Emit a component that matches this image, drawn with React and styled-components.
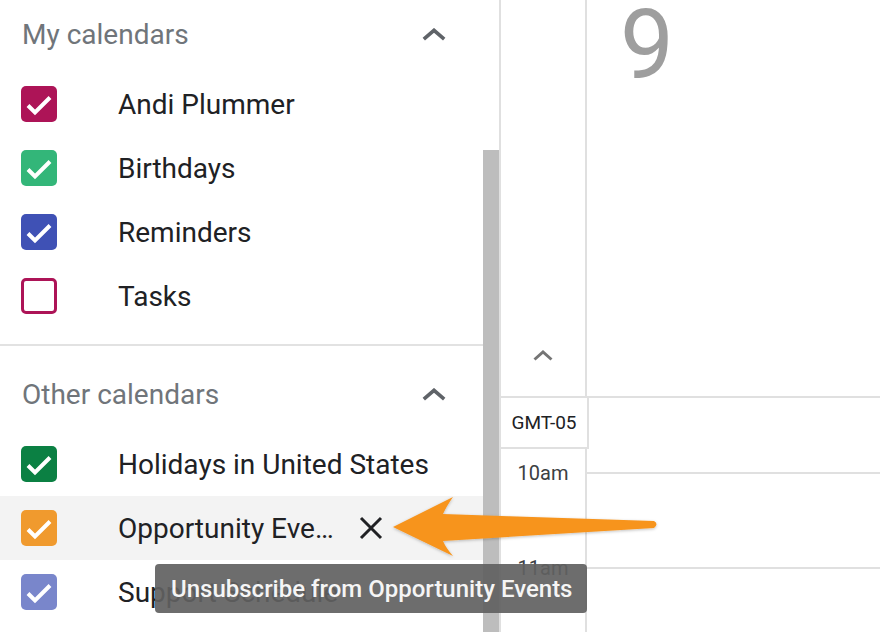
import React from "react";
import styled, { createGlobalStyle } from "styled-components";

const Global = createGlobalStyle`
  html, body { margin: 0; padding: 0; background: #fff; }
  body { font-family: Roboto, "Noto Sans", Arial, sans-serif; overflow: hidden; }
  * { box-sizing: border-box; }
`;

const Page = styled.div`
  position: relative;
  width: 880px;
  height: 632px;
  display: flex;
  overflow: hidden;
  background: #fff;
`;

const Sidebar = styled.div`
  display: flex;
  width: 499px;
  height: 100%;
  flex: none;
`;

const SideContent = styled.div`
  width: 483px;
  display: flex;
  flex-direction: column;
`;

const ScrollTrack = styled.div`
  width: 16px;
  display: flex;
  flex-direction: column;
  padding-top: 150px;
`;

const ScrollThumb = styled.div`
  flex: 1;
  background: #bdbdbd;
`;

const SectionHeader = styled.div`
  height: 68px;
  flex: none;
  margin-top: ${(p) => p.$top || 0}px;
  display: flex;
  align-items: center;
  justify-content: space-between;
  padding: 0 37px 0 22px;
  font-size: 28px;
  color: #70757a;
`;

const List = styled.div`
  margin-top: 4px;
  display: flex;
  flex-direction: column;
  flex: none;
`;

const Row = styled.div`
  height: 64px;
  display: flex;
  align-items: center;
  padding-left: 21px;
  background: ${(p) => (p.$hover ? "#f3f3f3" : "transparent")};
`;

const Box = styled.div`
  width: 36px;
  height: 36px;
  flex: none;
  border-radius: 5px;
  background: ${(p) => (p.$checked ? p.$color : "#fff")};
  border: ${(p) => (p.$checked ? "none" : `3px solid ${p.$color}`)};
  display: flex;
  align-items: center;
  justify-content: center;
`;

const Label = styled.span`
  margin-left: 61px;
  font-size: 28px;
  color: #202124;
  white-space: nowrap;
  overflow: hidden;
  text-overflow: ellipsis;
  max-width: ${(p) => (p.$max ? `${p.$max}px` : "none")};
`;

const CloseBtn = styled.span`
  margin-left: 25px;
  width: 24px;
  height: 24px;
  display: flex;
  align-items: center;
  justify-content: center;
`;

const Divider = styled.div`
  height: 2px;
  flex: none;
  background: #e2e2e2;
  margin-top: 16px;
`;

const Main = styled.div`
  flex: 1;
  display: flex;
  flex-direction: column;
  border-left: 2px solid #e0e0e0;
  overflow: hidden;
`;

const HeadRow = styled.div`
  height: 398px;
  flex: none;
  display: flex;
  border-bottom: 2px solid #e0e0e0;
`;

const Gutter = styled.div`
  width: 86px;
  flex: none;
  display: flex;
  flex-direction: column;
  align-items: center;
  justify-content: flex-end;
  padding-bottom: 35px;
  border-right: 2px solid #e0e0e0;
`;

const DayHead = styled.div`
  flex: 1;
  padding-left: 33px;
  font-size: 96px;
  line-height: 90px;
  color: #9e9e9e;
`;

const BodyRow = styled.div`
  flex: 1;
  min-height: 0;
  display: flex;
`;

const TimeCol = styled.div`
  width: 86px;
  flex: none;
  display: flex;
  flex-direction: column;
`;

const ZoneBox = styled.div`
  height: 51px;
  width: 88px;
  flex: none;
  border-right: 2px solid #e0e0e0;
  border-bottom: 2px solid #e0e0e0;
  display: flex;
  align-items: center;
  justify-content: center;
  font-size: 19px;
  color: #202124;
`;

const HourLabels = styled.div`
  flex: 1;
  width: 86px;
  border-right: 2px solid #e0e0e0;
  padding-top: 14px;
  display: flex;
  flex-direction: column;
  align-items: center;
`;

const HourLabel = styled.div`
  height: 95px;
  flex: none;
  font-size: 20px;
  line-height: 20px;
  color: #3c4043;
`;

const DayCol = styled.div`
  flex: 1;
  padding-top: 74px;
  display: flex;
  flex-direction: column;
`;

const HourSlot = styled.div`
  height: 95px;
  flex: none;
  border-top: 2px solid #e0e0e0;
`;

const Tooltip = styled.div`
  position: absolute;
  left: 155px;
  top: 564px;
  width: 432px;
  height: 49px;
  border-radius: 4px;
  background: rgba(97, 97, 97, 0.92);
  color: #f5f5f5;
  font-size: 24px;
  font-weight: 500;
  display: flex;
  align-items: center;
  padding-left: 16px;
  white-space: nowrap;
`;

const ArrowSvg = styled.svg`
  position: absolute;
  left: 380px;
  top: 490px;
  overflow: visible;
`;

const Chevron = ({ w = 24, h = 13, color = "#5f6368", sw = 3.6 }) => (
  <svg width={w} height={h} viewBox={`0 0 ${w} ${h}`}>
    <polyline
      points={`${sw / 2},${h - sw / 2} ${w / 2},${sw / 2 + 0.5} ${w - sw / 2},${h - sw / 2}`}
      fill="none"
      stroke={color}
      strokeWidth={sw}
      strokeLinejoin="miter"
    />
  </svg>
);

const Check = () => (
  <svg width="36" height="36" viewBox="0 0 36 36">
    <polyline points="7,19.5 14,26.5 29,11.5" fill="none" stroke="#fff" strokeWidth="4" />
  </svg>
);

const CloseIcon = () => (
  <svg width="24" height="24" viewBox="0 0 24 24">
    <path d="M2 2 L22 22 M22 2 L2 22" stroke="#202124" strokeWidth="3" fill="none" />
  </svg>
);

const CalRow = ({ color, checked = true, name, hover, max }) => (
  <Row $hover={hover}>
    <Box $color={color} $checked={checked}>
      {checked && <Check />}
    </Box>
    <Label $max={max}>{name}</Label>
    {hover && (
      <CloseBtn>
        <CloseIcon />
      </CloseBtn>
    )}
  </Row>
);

export default function App() {
  return (
    <Page>
      <Global />
      <Sidebar>
        <SideContent>
          <SectionHeader>
            <span>My calendars</span>
            <Chevron />
          </SectionHeader>
          <List>
            <CalRow color="#ad1457" name="Andi Plummer" />
            <CalRow color="#33b679" name="Birthdays" />
            <CalRow color="#3f51b5" name="Reminders" />
            <CalRow color="#ad1457" checked={false} name="Tasks" />
          </List>
          <Divider />
          <SectionHeader $top={14}>
            <span>Other calendars</span>
            <Chevron />
          </SectionHeader>
          <List>
            <CalRow color="#0b8043" name="Holidays in United States" />
            <CalRow color="#f09a2e" name="Opportunity Events" hover max={216} />
            <CalRow color="#7986cb" name="Support Schedule" />
          </List>
        </SideContent>
        <ScrollTrack>
          <ScrollThumb />
        </ScrollTrack>
      </Sidebar>
      <Main>
        <HeadRow>
          <Gutter>
            <Chevron w={20} h={11} color="#757575" sw={3} />
          </Gutter>
          <DayHead>9</DayHead>
        </HeadRow>
        <BodyRow>
          <TimeCol>
            <ZoneBox>GMT-05</ZoneBox>
            <HourLabels>
              <HourLabel>10am</HourLabel>
              <HourLabel>11am</HourLabel>
            </HourLabels>
          </TimeCol>
          <DayCol>
            <HourSlot />
            <HourSlot />
          </DayCol>
        </BodyRow>
      </Main>
      <ArrowSvg width="290" height="80">
        <defs>
          <filter id="sh" x="-10%" y="-30%" width="120%" height="160%">
            <feDropShadow dx="0" dy="1" stdDeviation="1.5" floodColor="#000" floodOpacity="0.25" />
          </filter>
        </defs>
        <path
          filter="url(#sh)"
          fill="#f7941d"
          d="M13,37 L73,7 Q66,17 63,24 L274,31 Q279,34 274,38 L63,51 Q66,58 73,66 Z"
        />
      </ArrowSvg>
      <Tooltip>Unsubscribe from Opportunity Events</Tooltip>
    </Page>
  );
}
